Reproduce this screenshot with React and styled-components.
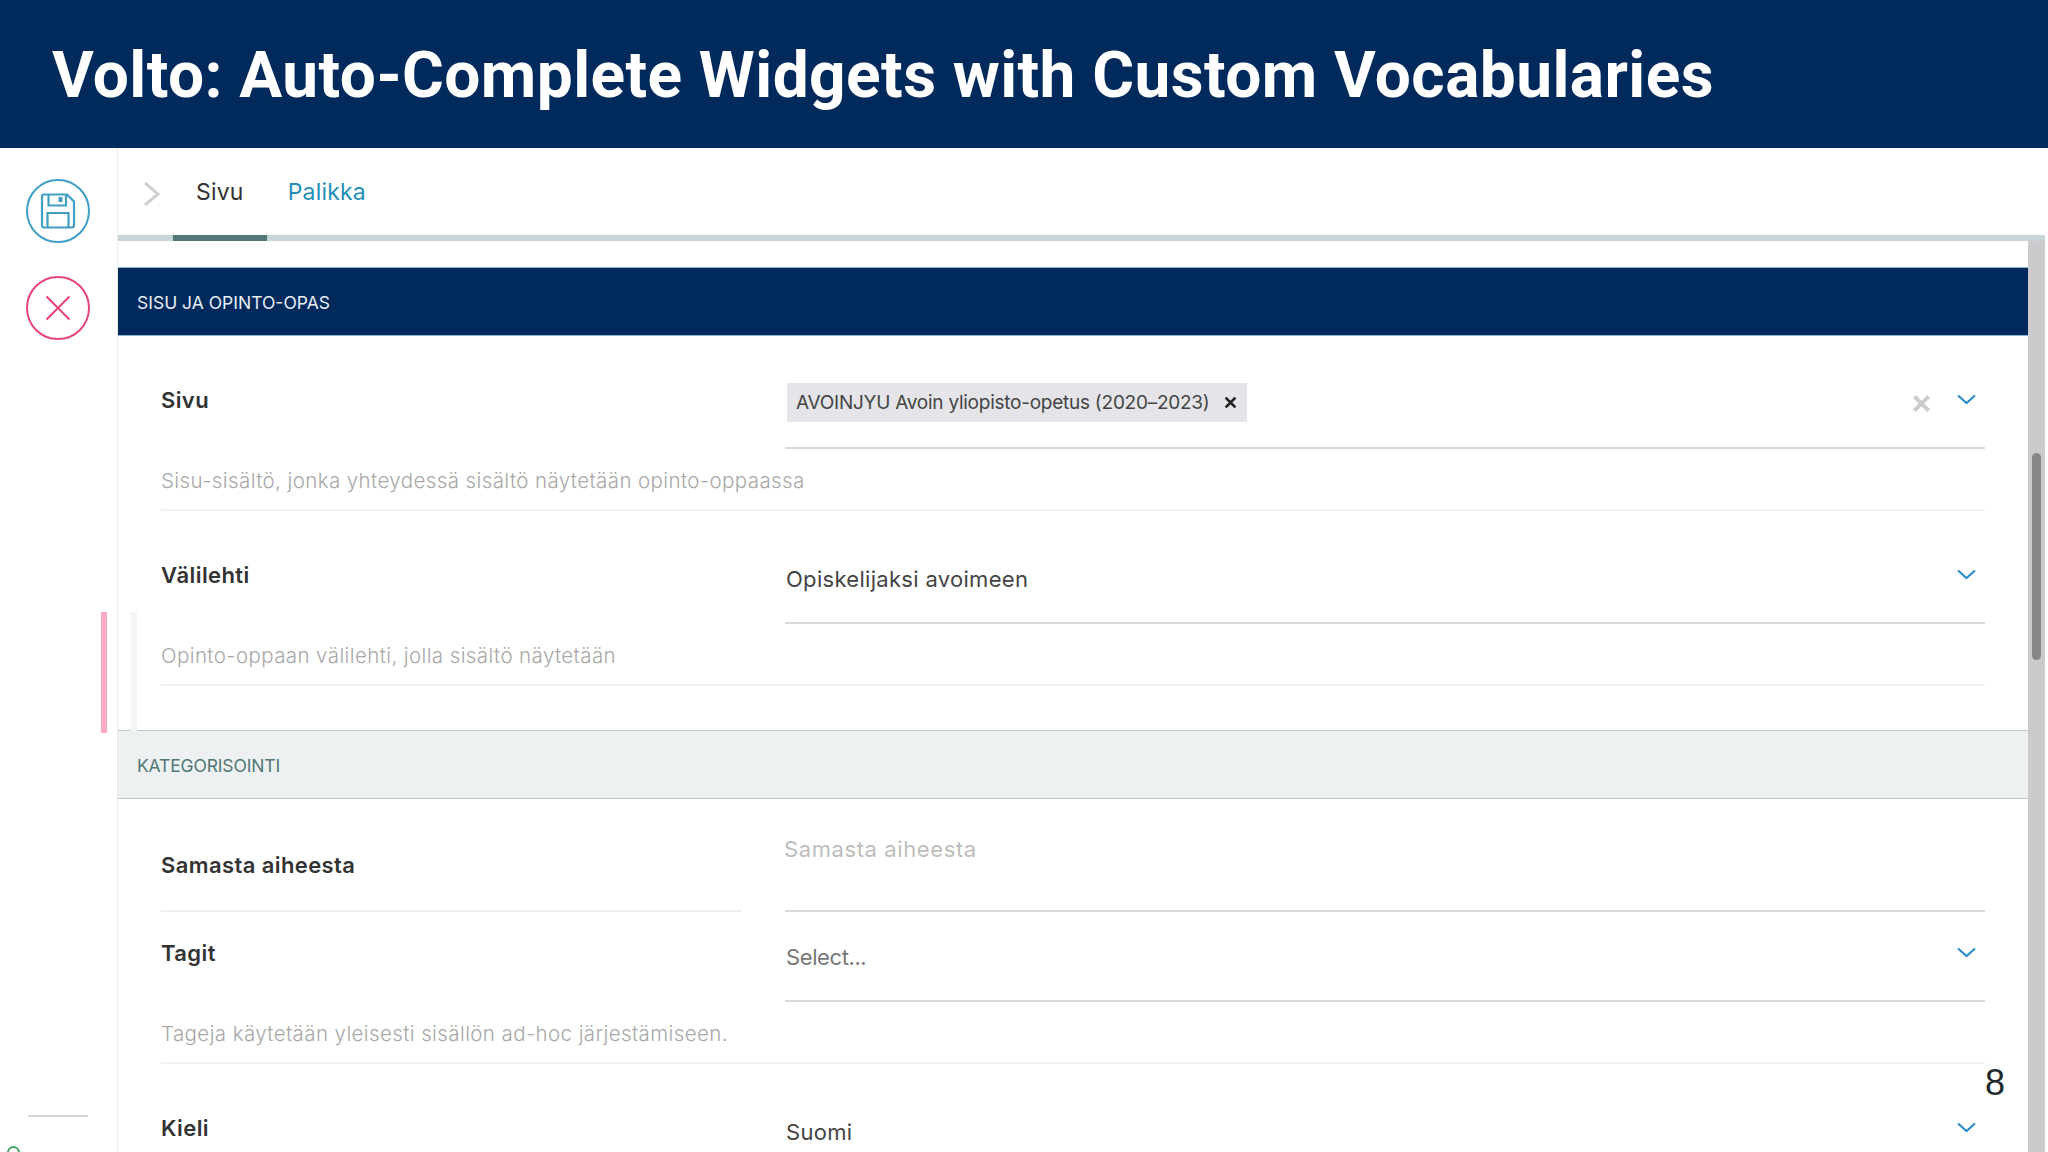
import styled, { createGlobalStyle } from "styled-components";

const GlobalStyle = createGlobalStyle`
	html, body {
		margin: 0;
		padding: 0;
		height: 1152px;
		overflow: hidden;
		background: #ffffff;
		font-family: "Inter", "Noto Sans", sans-serif;
	}
`;

const SaveIcon = () => (
	<svg width="38" height="38" viewBox="0 0 38 38" fill="none" stroke="#3f9fc4" strokeWidth="2.2">
		<path d="M3 4.5C3 3.5 3.7 2.5 4.8 2.5H28L35 9.5V33C35 34.5 34 35.5 33 35.5H5C3.8 35.5 3 34.5 3 33Z" />
		<path d="M9.5 2.5V13.5H27V2.5" />
		<rect x="19.5" y="5" width="4" height="5" fill="#3f9fc4" stroke="none" />
		<path d="M8.5 35.5V21H29.5V35.5" />
	</svg>
);

const CloseIcon = () => (
	<svg width="26" height="26" viewBox="0 0 26 26" fill="none" stroke="#e6447f" strokeWidth="2">
		<path d="M1.5 1.5L24.5 24.5M24.5 1.5L1.5 24.5" />
	</svg>
);

const Chevron = () => (
	<ChevronSvg width="19" height="11" viewBox="0 0 19 11" fill="none" stroke="#2f8fcb" strokeWidth="2.2">
		<path d="M1 1.5L9.5 9L18 1.5" />
	</ChevronSvg>
);

const Cross = ({ size, color, weight }) => (
	<svg width={size} height={size} viewBox="0 0 16 16" fill="none" stroke={color} strokeWidth={weight}>
		<path d="M2 2L14 14M14 2L2 14" />
	</svg>
);

const Field = ({ label, help, compact, children, chevron, clear }) => (
	<FieldWrap $compact={compact}>
		<FieldRow>
			<FieldLabel $compact={compact}>{label}</FieldLabel>
			<FieldControl>
				{children}
				{clear && (
					<ClearMark>
						<Cross size={19} color="#cccccc" weight={3.4} />
					</ClearMark>
				)}
				{chevron && <Chevron />}
			</FieldControl>
		</FieldRow>
		{help && <FieldHelp>{help}</FieldHelp>}
	</FieldWrap>
);

const App = () => {
	return (
		<>
			<GlobalStyle />
			<Page>
				<Header>
					<Title>Volto: Auto-Complete Widgets with Custom Vocabularies</Title>
				</Header>
				<Body>
					<Sidebar>
						<RoundButton $color="#3f9fc4">
							<SaveIcon />
						</RoundButton>
						<RoundButton $color="#e6447f">
							<CloseIcon />
						</RoundButton>
						<SidebarFoot>
							<SidebarRule />
							<StatusDot />
						</SidebarFoot>
					</Sidebar>
					<Main>
						<Tabs>
							<TabArrow width="18" height="26" viewBox="0 0 18 26" fill="none" stroke="#cfcfcf" strokeWidth="3">
								<path d="M2 2L15 13L2 24" />
							</TabArrow>
							<Tab $active>Sivu</Tab>
							<Tab>Palikka</Tab>
						</Tabs>
						<ScrollArea>
							<Content>
								<SectionHead $dark>SISU JA OPINTO-OPAS</SectionHead>
								<Section $pad="35px 43px 9px 43px">
									<Field
										label="Sivu"
										help="Sisu-sisältö, jonka yhteydessä sisältö näytetään opinto-oppaassa"
										clear
										chevron
									>
										<Chip>
											AVOINJYU Avoin yliopisto-opetus (2020–2023)
											<ChipX>
												<Cross size={13} color="#222222" weight={3.4} />
											</ChipX>
										</Chip>
									</Field>
									<Field
										label="Välilehti"
										help="Opinto-oppaan välilehti, jolla sisältö näytetään"
										chevron
									>
										<Value>Opiskelijaksi avoimeen</Value>
									</Field>
								</Section>
								<SectionHead>KATEGORISOINTI</SectionHead>
								<Section $pad="35px 43px 9px 43px">
									<Field label="Samasta aiheesta" compact>
										<Placeholder>Samasta aiheesta</Placeholder>
									</Field>
									<Field
										label="Tagit"
										help="Tageja käytetään yleisesti sisällön ad-hoc järjestämiseen."
										chevron
									>
										<Value $muted>Select...</Value>
									</Field>
									<Field label="Kieli" chevron>
										<Value>Suomi</Value>
									</Field>
								</Section>
							</Content>
							<Scrollbar>
								<ScrollThumb />
							</Scrollbar>
							<PinkMark />
							<PaleMark />
						</ScrollArea>
						<PageNumber>8</PageNumber>
					</Main>
				</Body>
			</Page>
		</>
	);
};

export default App;

const Page = styled.div`
	width: 2048px;
	height: 1152px;
	display: flex;
	flex-direction: column;
	overflow: hidden;
`;

const Header = styled.header`
	height: 148px;
	flex: none;
	background-color: #002a5c;
	display: flex;
	align-items: center;
	padding-left: 52px;
`;

const Title = styled.h1`
	margin: 2px 0 0 0;
	font-family: "Roboto", "Open Sans", sans-serif;
	font-size: 64px;
	font-weight: 700;
	letter-spacing: 0.42px;
	color: #ffffff;
	white-space: nowrap;
`;

const Body = styled.div`
	flex: 1;
	min-height: 0;
	display: flex;
`;

const Sidebar = styled.aside`
	width: 118px;
	flex: none;
	box-sizing: border-box;
	border-right: 1px solid #ececec;
	padding: 31px 1px 0 0;
	display: flex;
	flex-direction: column;
	align-items: center;
	gap: 33px;
	position: relative;
`;

const RoundButton = styled.div`
	width: 64px;
	height: 64px;
	box-sizing: border-box;
	border: 2.5px solid ${(props) => props.$color};
	border-radius: 50%;
	display: flex;
	align-items: center;
	justify-content: center;
`;

const SidebarFoot = styled.div`
	position: absolute;
	left: 0;
	right: 0;
	bottom: 0;
	height: 37px;
`;

const SidebarRule = styled.div`
	width: 60px;
	height: 2px;
	margin-left: 28px;
	background-color: #d5d5d5;
`;

const StatusDot = styled.div`
	position: absolute;
	left: 7px;
	top: 31px;
	width: 13px;
	height: 13px;
	box-sizing: border-box;
	border: 2px solid #4aa564;
	border-radius: 50%;
`;

const Main = styled.main`
	flex: 1;
	min-width: 0;
	display: flex;
	flex-direction: column;
	position: relative;
`;

const Tabs = styled.nav`
	height: 93px;
	flex: none;
	box-sizing: border-box;
	margin-right: 3px;
	border-bottom: 6px solid #c7d5d8;
	display: flex;
	padding-left: 25px;
`;

const TabArrow = styled.svg`
	margin-top: 33px;
	flex: none;
	margin-right: 12px;
`;

const Tab = styled.div`
	height: 93px;
	box-sizing: border-box;
	padding: 30px 23px 0 23px;
	margin-right: -2px;
	font-size: 23px;
	line-height: 28px;
	letter-spacing: 0.2px;
	color: ${(props) => (props.$active ? "#333333" : "#1f8fb5")};
	border-bottom: 6px solid ${(props) => (props.$active ? "#517776" : "transparent")};
`;

const ScrollArea = styled.div`
	flex: 1;
	min-height: 0;
	display: flex;
	margin-right: 3px;
	position: relative;
`;

const Content = styled.div`
	flex: 1;
	min-width: 0;
	padding-top: 26px;
	overflow: hidden;
`;

const SectionHead = styled.div`
	height: 69px;
	box-sizing: border-box;
	padding: 2px 0 0 19px;
	display: flex;
	align-items: center;
	font-size: 17.5px;
	letter-spacing: ${(props) => (props.$dark ? "0" : "-0.15px")};
	border-top: 1px solid ${(props) => (props.$dark ? "#8fb4cf" : "#c5c8c9")};
	border-bottom: 1px solid ${(props) => (props.$dark ? "#8fb4cf" : "#c5c8c9")};
	background-color: ${(props) => (props.$dark ? "#002a5c" : "#edf1f2")};
	color: ${(props) => (props.$dark ? "#e8eef4" : "#517776")};
`;

const Section = styled.section`
	padding: ${(props) => props.$pad};
`;

const FieldWrap = styled.div`
	padding-bottom: ${(props) => (props.$compact ? "12px" : "35px")};
`;

const FieldRow = styled.div`
	display: grid;
	grid-template-columns: 581px 1fr;
	column-gap: 43px;
`;

const FieldLabel = styled.div`
	height: 78px;
	box-sizing: border-box;
	padding-top: ${(props) => (props.$compact ? "17px" : "15px")};
	font-size: 22px;
	line-height: 28px;
	font-weight: 600;
	letter-spacing: 0.4px;
	color: #333333;
	border-bottom: ${(props) => (props.$compact ? "2px solid #f0f0f0" : "none")};
`;

const FieldControl = styled.div`
	height: 78px;
	box-sizing: border-box;
	border-bottom: 2px solid #d9d9d9;
	display: flex;
	align-items: flex-start;
	position: relative;
`;

const ChevronSvg = styled.svg`
	position: absolute;
	right: 9px;
	top: 23px;
`;

const ClearMark = styled.span`
	position: absolute;
	right: 54px;
	top: 23px;
	display: flex;
`;

const Chip = styled.div`
	margin: 12px 0 0 2px;
	width: 460px;
	height: 39px;
	box-sizing: border-box;
	padding-left: 9px;
	display: flex;
	align-items: center;
	font-size: 19px;
	letter-spacing: -0.25px;
	color: #444444;
	background-color: #e5e4e8;
	white-space: nowrap;
`;

const ChipX = styled.span`
	margin-left: auto;
	margin-right: 10px;
	display: flex;
`;

const Value = styled.div`
	margin: 18px 0 0 1px;
	font-size: 22px;
	line-height: 30px;
	letter-spacing: ${(props) => (props.$muted ? "-0.4px" : "0.3px")};
	color: ${(props) => (props.$muted ? "#777777" : "#444444")};
`;

const Placeholder = styled.div`
	margin-left: -1px;
	font-size: 22px;
	line-height: 30px;
	letter-spacing: 0.6px;
	color: #bdbdbd;
`;

const FieldHelp = styled.div`
	height: 62px;
	box-sizing: border-box;
	padding-top: 19px;
	font-size: 20.5px;
	line-height: 26px;
	font-weight: 300;
	letter-spacing: 0.4px;
	color: #a8a8a8;
	border-bottom: 2px solid #f2f2f2;
`;

const Scrollbar = styled.div`
	width: 17px;
	flex: none;
	background-color: #cbcbcd;
	position: relative;
`;

const ScrollThumb = styled.div`
	position: absolute;
	left: 4px;
	top: 212px;
	width: 9px;
	height: 207px;
	border-radius: 5px;
	background-color: #87878a;
`;

const PinkMark = styled.div`
	position: absolute;
	left: -17px;
	top: 371px;
	width: 6px;
	height: 121px;
	background-color: #f7a9c6;
`;

const PaleMark = styled.div`
	position: absolute;
	left: 13px;
	top: 371px;
	width: 6px;
	height: 120px;
	background-color: #f3f5f6;
`;

const PageNumber = styled.div`
	position: absolute;
	left: 1867px;
	top: 915px;
	font-family: "Liberation Sans", sans-serif;
	font-size: 36px;
	line-height: 40px;
	color: #1f2a2a;
`;
